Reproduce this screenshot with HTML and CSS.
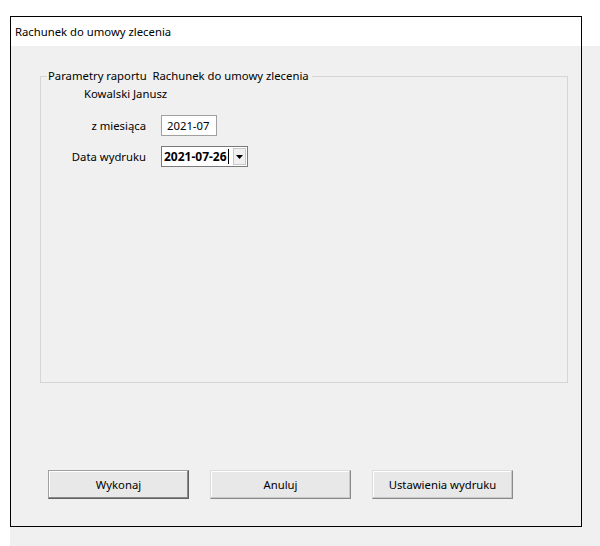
FILE: index.html
```html
<!DOCTYPE html>
<html lang="pl">
<head>
	<meta charset="utf-8">
	<title>Rachunek do umowy zlecenia</title>
	<link rel="stylesheet" href="styles.css">
</head>
<body>

	<div class="screen">
		<div class="window">
			<div class="caption">Rachunek do umowy zlecenia</div>

			<div class="client">
				<fieldset class="group">
					<legend>Parametry raportu&nbsp; Rachunek do umowy zlecenia</legend>
					<div class="person">Kowalski Janusz</div>

					<div class="form">
						<label class="lbl">z miesiąca</label>
						<div class="edit">2021-07</div>

						<label class="lbl">Data wydruku</label>
						<div class="picker">
							<span class="picker-text">2021-07-26</span><span class="caret"></span>
							<span class="drop">
								<svg width="7" height="4" viewBox="0 0 7 4"><path d="M0 0h7L3.5 4z" fill="#000"/></svg>
							</span>
						</div>
					</div>
				</fieldset>

				<div class="buttons">
					<button type="button" class="btn default">Wykonaj</button>
					<button type="button" class="btn">Anuluj</button>
					<button type="button" class="btn">Ustawienia wydruku</button>
				</div>
			</div>
		</div>
	</div>

</body>
</html>
```

FILE: styles.css
```css
* {
	margin: 0;
	padding: 0;
	box-sizing: border-box;
}

body {
	font-family: "Noto Sans", "Open Sans", sans-serif;
	font-size: 11.3px;
	color: #000;
	background: #fff;
}

/* gray desktop area starts under the caption */
.screen {
	margin-left: 10px;
	height: 546px;
	padding-top: 16px;
	background: linear-gradient(to bottom, #fff 46px, #f0f0f0 46px);
}

.window {
	width: 572px;
	height: 511px;
	border: 1px solid #000;
}

.caption {
	height: 29px;
	line-height: 30px;
	padding-left: 4px;
	background: #fff;
}

.client {
	padding-top: 23px;
}

.group {
	margin-left: 29px;
	width: 528px;
	height: 314px;
	border: 1px solid #d5d5d5;
	padding: 0;
}

.group legend {
	margin-left: 6px;
	padding: 0 3px 0 1px;
	line-height: 14px;
}

.person {
	margin: 3px 0 0 43px;
	line-height: 16px;
}

.form {
	display: grid;
	grid-template-columns: 105px auto;
	column-gap: 15px;
	row-gap: 10px;
	margin-top: 13px;
	align-items: center;
	justify-items: start;
}

.lbl {
	justify-self: end;
}

.edit {
	height: 21px;
	width: 56px;
	border: 1px solid #a0a0a0;
	background: #fff;
	line-height: 19px;
	padding-left: 5px;
}

.picker {
	display: flex;
	align-items: center;
	height: 21px;
	width: 87px;
	border: 1px solid #7a7a7a;
	background: #fff;
	padding-left: 2px;
}

.picker-text {
	font-weight: bold;
	font-size: 12px;
	line-height: 19px;
}

.caret {
	width: 1px;
	height: 15px;
	background: #000;
	margin-left: 1px;
}

.drop {
	display: flex;
	align-items: center;
	justify-content: center;
	margin-left: auto;
	margin-right: 1px;
	width: 13px;
	height: 17px;
	background: #f0f0f0;
	border: 1px solid #c8c8c8;
}

.buttons {
	display: flex;
	gap: 21px;
	margin: 87px 0 0 37px;
}

.btn {
	width: 141px;
	height: 29px;
	font-family: inherit;
	font-size: 11.3px;
	background: #e8e8e8;
	border: 1px solid;
	border-color: #dcdcdc #8a8a8a #8a8a8a #dcdcdc;
	box-shadow: inset -1px -1px 0 #c8c8c8, inset 1px 1px 0 #fff;
	color: #000;
}

.btn.default {
	border-color: #a0a0a0 #606060 #606060 #a0a0a0;
	box-shadow: inset -1px -1px 0 #8a8a8a, inset 1px 1px 0 #fff;
}
```
